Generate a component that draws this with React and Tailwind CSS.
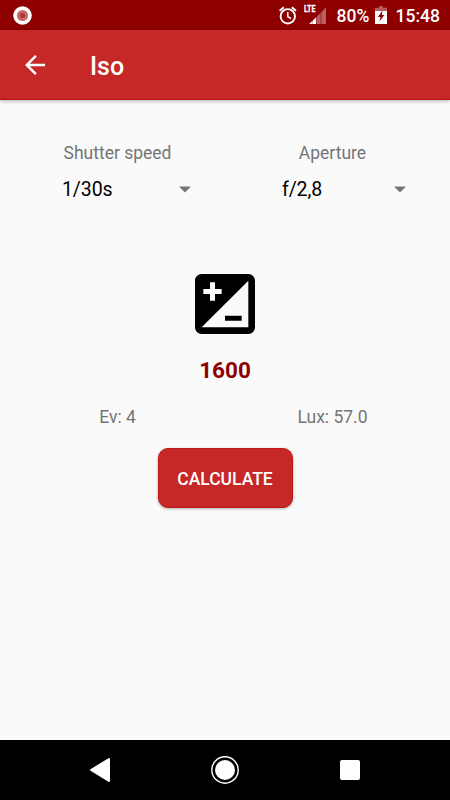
import React from "react";
import { MdArrowBack, MdIso } from "react-icons/md";

function StatusBar() {
  return (
    <div className="flex h-[30px] items-center bg-[#8e0000] pl-[13px] pr-[10px] text-white">
      <svg className="h-[19px] w-[19px]" viewBox="0 0 19 19">
        <circle cx="9.5" cy="9.5" r="9.3" fill="#fff" />
        <circle cx="9.5" cy="9.5" r="5.6" fill="#c46a6a" />
        <circle cx="9.5" cy="9.5" r="2.6" fill="#a73838" />
      </svg>

      <svg className="ml-auto h-[19px] w-[18px]" viewBox="0 0 18 19" fill="none" stroke="#fff" strokeWidth="1.9">
        <circle cx="8.8" cy="10.3" r="7.2" />
        <path d="M8.8 6v4.6l3.2 1.9" strokeWidth="1.5" />
        <path d="M.6 4.7 4.8 1.2M17 4.7 12.8 1.2" />
      </svg>

      <svg className="ml-[7px] h-[26px] w-[23px]" viewBox="0 0 23 26">
        <text x="0" y="10" fill="#fff" stroke="#fff" strokeWidth=".3" className="font-bold" fontSize="9.5" textLength="11.5" lengthAdjust="spacingAndGlyphs">LTE</text>
        <g transform="translate(0 3)" fill="#fff">
          <path d="M5 19 8 16.2V19zM9 15.3 12 12.4V19H9z" />
          <path d="M8 16.2 9 15.3V19H8z" fillOpacity=".75" />
          <path d="M13 11.4 16.5 8v11H13zM17.5 7 22 2.4V19h-4.5z" fillOpacity=".38" />
          <path d="M12 12.4 13 11.4V19h-1zM16.5 8l1-1v12h-1z" fillOpacity=".2" />
        </g>
      </svg>

      <span className="ml-[10px] w-[33px] whitespace-nowrap pt-[3px] text-[17.5px] font-medium leading-none">80%</span>

      <svg className="ml-[5px] h-[18px] w-[12px]" viewBox="0 0 12 18">
        <path d="M4 0h4v1.8h4V5H0V1.8h4z" fill="#fff" fillOpacity=".35" />
        <path d="M0 5h12v13H0z" fill="#fff" />
        <path d="M7.6 4.5 2.8 11h2.7L4.4 15.5 9.4 9H6.8z" fill="#8e0000" />
      </svg>

      <span className="ml-[9px] whitespace-nowrap pt-[3px] text-[17.5px] font-medium leading-none">15:48</span>
    </div>
  );
}

function AppBar() {
  return (
    <header className="z-10 flex h-[70px] items-center border-b border-[#b90f0f] bg-[#c62828] pl-5 text-white shadow-[0_1px_4px_rgba(0,0,0,0.3)]">
      <MdArrowBack className="h-[30px] w-[30px]" />
      <h1 className="ml-10 pt-1 text-[25px] font-medium leading-[30px]">Iso</h1>
    </header>
  );
}

function Spinner({ value, className }) {
  return (
    <div className={`flex h-6 items-center justify-between text-[19.5px] leading-6 text-black ${className}`}>
      <span className="pt-[2px] tracking-[-0.1px]">{value}</span>
      <svg className="h-[7px] w-3" viewBox="0 0 12 7">
        <path d="M0 .5h12L6 6.5z" fill="#757575" />
      </svg>
    </div>
  );
}

function NavBar() {
  return (
    <nav className="flex h-[60px] items-center justify-between bg-black pl-[89px] pr-[90px]">
      <svg className="h-[26px] w-[21px]" viewBox="0 0 21 26">
        <path d="M2 13 20 2v22z" fill="#fff" stroke="#fff" strokeWidth="2" strokeLinejoin="round" />
      </svg>
      <svg className="h-7 w-7" viewBox="0 0 28 28">
        <circle cx="14" cy="14" r="13.2" fill="none" stroke="#fff" strokeWidth="1.4" />
        <circle cx="14" cy="14" r="10" fill="#fff" />
      </svg>
      <div className="h-5 w-5 rounded-[2px] bg-white" />
    </nav>
  );
}

export default function App() {
  return (
    <div className="flex h-[800px] w-[450px] flex-col overflow-hidden bg-[#fafafa] font-[Roboto,sans-serif]">
      <StatusBar />
      <AppBar />

      <main className="flex flex-1 flex-col items-center text-[17.5px] leading-6 text-[#757575]">
        <div className="mt-[41px] grid w-full grid-cols-[235px_195px]">
          <div className="text-center">Shutter speed</div>
          <div className="text-center">Aperture</div>
        </div>
        <div className="mt-3 flex w-full pl-[62px]">
          <Spinner value="1/30s" className="w-[129px]" />
          <Spinner value="f/2,8" className="ml-[91px] w-[124px]" />
        </div>

        <MdIso className="mt-[63px] h-20 w-20 text-black" />
        <div className="mt-[13px] text-[22.5px] font-bold leading-[27px] text-[#8e0000]">1600</div>

        <div className="mt-[21px] grid w-full grid-cols-[235px_195px]">
          <div className="text-center">Ev: 4</div>
          <div className="text-center">Lux: 57.0</div>
        </div>

        <button className="mt-[19px] h-[60px] w-[135px] rounded-[10px] border border-[#c01818] bg-[#c62828] pt-[2px] text-[17.5px] font-medium text-white shadow-[0_1px_3px_rgba(0,0,0,0.3)]">
          CALCULATE
        </button>
      </main>

      <NavBar />
    </div>
  );
}
